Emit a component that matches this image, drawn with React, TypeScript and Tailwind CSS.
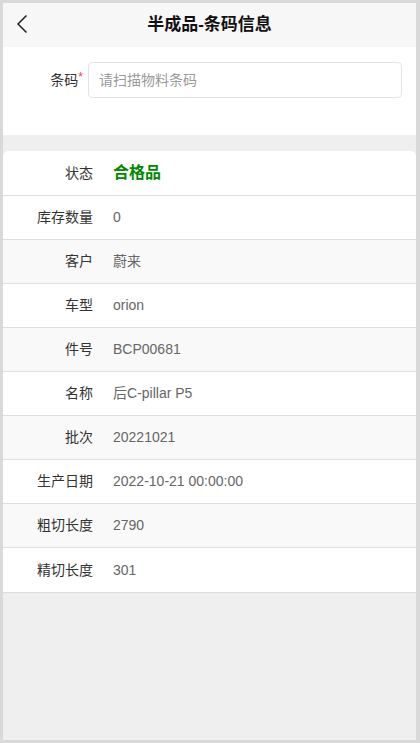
import React from "react";

const rows: { label: string; value: string; bg: string; status?: boolean }[] = [
  { label: "状态", value: "合格品", bg: "bg-white", status: true },
  { label: "库存数量", value: "0", bg: "bg-white" },
  { label: "客户", value: "蔚来", bg: "bg-[#f9f9f9]" },
  { label: "车型", value: "orion", bg: "bg-white" },
  { label: "件号", value: "BCP00681", bg: "bg-[#f9f9f9]" },
  { label: "名称", value: "后C-pillar P5", bg: "bg-white" },
  { label: "批次", value: "20221021", bg: "bg-[#f9f9f9]" },
  { label: "生产日期", value: "2022-10-21 00:00:00", bg: "bg-white" },
  { label: "粗切长度", value: "2790", bg: "bg-[#f9f9f9]" },
  { label: "精切长度", value: "301", bg: "bg-white" },
];

export default function App() {
  return (
    <div
      className="h-[743px] w-[420px] overflow-hidden border-t-[3px] border-l-[3px] border-b-[3px] border-r-4 border-[#d9d9d9] bg-[#efefef] flex flex-col"
      style={{ fontFamily: '"Liberation Sans", Arial, "Noto Sans CJK SC", sans-serif' }}
    >
      <header className="relative h-[44px] shrink-0 bg-[#f7f7f7] flex items-center justify-center">
        <svg
          className="absolute left-[13px] top-[11px]"
          width="12"
          height="20"
          viewBox="0 0 12 20"
          fill="none"
        >
          <path d="M10.5 1.5 L2 10 L10.5 18.5" stroke="#222" strokeWidth="1.5" />
        </svg>
        <h1 className="text-[17px] font-bold text-[#111]">半成品-条码信息</h1>
      </header>

      <section className="h-[88px] shrink-0 bg-white flex items-start pt-[15px]">
        <div className="w-[85px] flex justify-end items-center h-[36px] pr-[5px]">
          <span className="text-[14px] text-[#333]">条码</span>
          <span className="text-[12px] text-[#ee4444] self-start mt-[9px] leading-none">*</span>
        </div>
        <div className="w-[314px] h-[36px] border border-[#e3e3e3] rounded-[4px] flex items-center px-[10px]">
          <span className="text-[14px] text-[#9a9a9a]">请扫描物料条码</span>
        </div>
      </section>

      <div className="h-[16px] shrink-0" />

      <section className="bg-white rounded-t-[6px] overflow-hidden border-b border-[#dcdcdc]">
        {rows.map((r, i) => (
          <div
            key={r.label}
            className={`${r.bg} flex items-center ${i === 0 ? "h-[45px]" : "h-[44px]"} ${
              i < rows.length - 1 ? "border-b border-[#dedede]" : ""
            }`}
          >
            <div className="w-[90px] text-right text-[14px] text-[#333]">{r.label}</div>
            {r.status ? (
              <div className="ml-[20px] text-[16px] font-bold text-[#008800]">{r.value}</div>
            ) : (
              <div className="ml-[20px] text-[14px] text-[#666]">{r.value}</div>
            )}
          </div>
        ))}
      </section>
    </div>
  );
}
